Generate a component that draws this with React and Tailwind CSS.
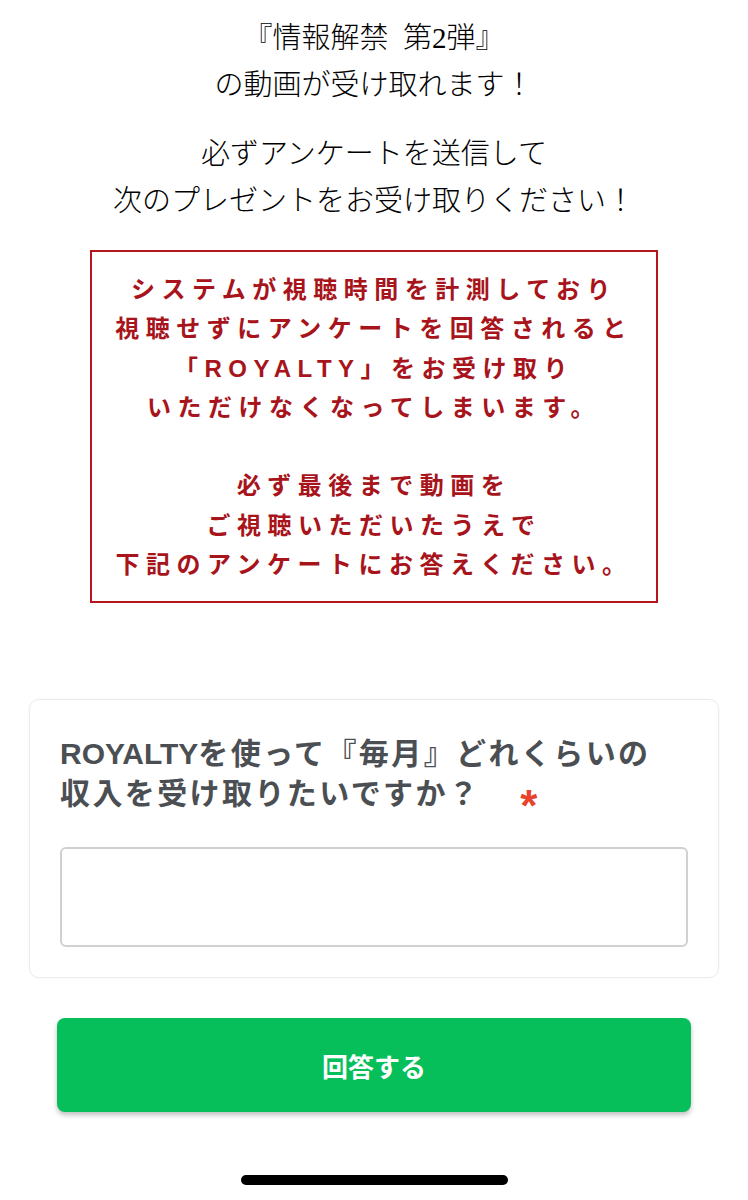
export default function App() {
  return (
    <div className="w-[748px] min-h-[1200px] bg-white flex flex-col">
      <div className="pt-[15px] flex flex-col items-center text-black font-['Liberation_Serif','Noto_Sans_CJK_JP',serif] font-light text-[29px] leading-[47px] text-center">
        <p>『情報解禁&nbsp;&nbsp;第2弾』<br />の動画が受け取れます！</p>
        <p className="mt-[22px]">必ずアンケートを送信して<br />次のプレゼントをお受け取りください！</p>
      </div>

      <div className="mt-[25px] mx-[90px] border-2 border-[#b5161e] pt-[18px] pb-[17px] text-center text-[#a8141b] font-['Liberation_Sans','Noto_Sans_CJK_JP',sans-serif] font-bold text-[24px] leading-[39.3px] tracking-[6.5px]">
        <p>システムが視聴時間を計測しており</p>
        <p>視聴せずにアンケートを回答されると</p>
        <p>「ROYALTY」をお受け取り</p>
        <p>いただけなくなってしまいます。</p>
        <p>&nbsp;</p>
        <p>必ず最後まで動画を</p>
        <p>ご視聴いただいたうえで</p>
        <p>下記のアンケートにお答えください。</p>
      </div>

      <div className="mt-[96px] mx-[29px] border border-[#ebebeb] rounded-[10px] shadow-[0_0_3px_rgba(0,0,0,0.04)] px-[30px] pt-[34px] pb-[30px]">
        <p className="font-['Liberation_Sans','Noto_Sans_CJK_JP',sans-serif] font-bold text-[30px] leading-[40px] tracking-[2.4px] text-[#4b4f53]">
          <span className="tracking-normal">ROYALTY</span>を使って『毎月』どれくらいの
          <br />
          収入を受け取りたいですか？
          <span className="ml-[40px] inline-block leading-[0] text-[#e8412c] text-[44px] align-[-17px]">*</span>
        </p>
        <input
          type="text"
          className="mt-[33px] block w-full h-[100px] border-2 border-[#d0d0d0] rounded-[6px] bg-white outline-none"
        />
      </div>

      <button className="mt-[40px] mx-[57px] h-[94px] bg-[#07bf5a] rounded-[8px] shadow-[0_3px_5px_rgba(0,0,0,0.25)] text-white font-['Noto_Sans_CJK_JP',sans-serif] font-bold text-[26px] flex items-center justify-center">
        回答する
      </button>

      <div className="mt-[63px] mx-auto w-[267px] h-[10px] rounded-full bg-black" />
    </div>
  );
}
